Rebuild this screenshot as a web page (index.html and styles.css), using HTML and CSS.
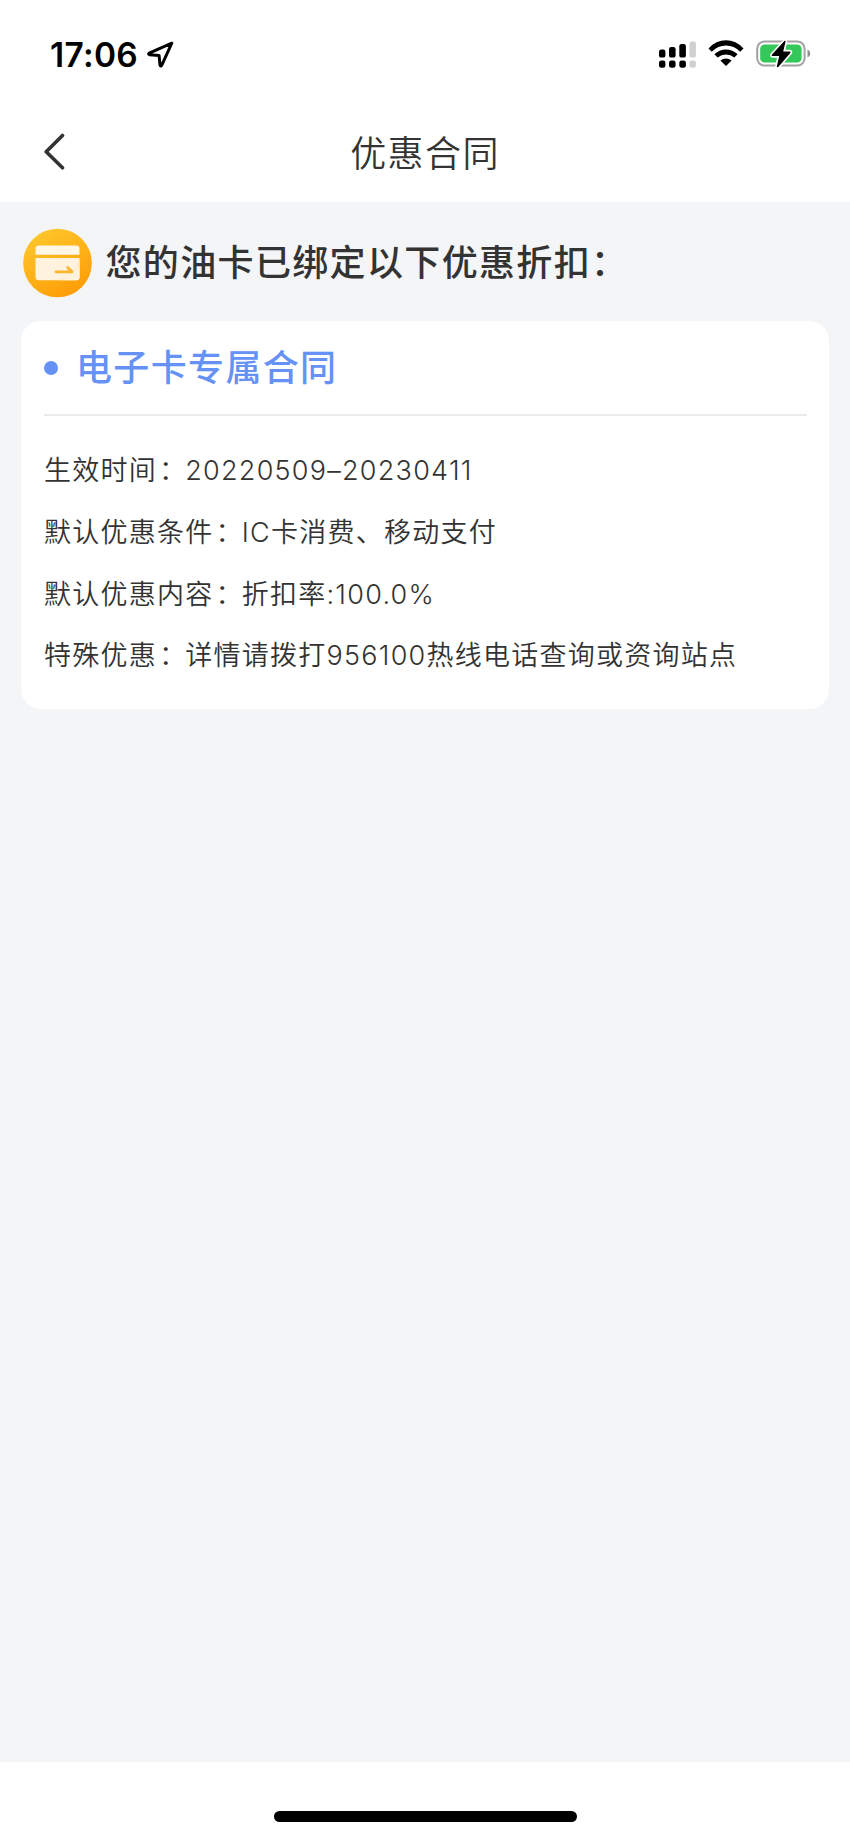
FILE: index.html
```html
<!DOCTYPE html>
<html lang="zh-CN">
<head>
<meta charset="utf-8">
<title>优惠合同</title>
<link rel="stylesheet" href="styles.css">
</head>
<body>
<div class="screen">
  <div class="status">
    <span class="time">17:06</span>
    <svg class="locate" width="30" height="30" viewBox="0 0 30 30"><path d="M25.8 3.2 3.2 13.2Q1.9 14.2 3.4 14.7L13.1 15.4 14 25.2Q14.7 27 15.7 25.3Z" fill="none" stroke="#000" stroke-width="3" stroke-linejoin="round"/></svg>
    <svg class="signal" width="38" height="28" viewBox="0 0 38 28">
      <rect x="0" y="8.6" width="6.4" height="8" rx="2.2"/><rect x="10" y="6" width="6.6" height="10.6" rx="2.2"/><rect x="20.3" y="3" width="6.6" height="13.6" rx="2.2"/>
      <rect x="0" y="19.4" width="6.4" height="7.4" rx="2.4"/><rect x="10" y="19.4" width="6.6" height="7.4" rx="2.4"/><rect x="20.3" y="19.4" width="6.6" height="7.4" rx="2.4"/>
      <g fill="#d0d0d0"><rect x="30.5" y="0.4" width="6.4" height="16.2" rx="2.2"/><rect x="30.5" y="19.4" width="6.4" height="7.4" rx="2.4"/></g>
    </svg>
    <svg class="wifi" width="36" height="26" viewBox="0 0 36 26"><path d="M0.5 8.4Q8 .3 18 .3T35.5 8.4L32.2 11.7Q26 5.6 18 5.6T3.8 11.7ZM6.4 14.3Q11.3 9.5 18 9.5T29.6 14.3L26.3 17.6Q22.7 14.6 18 14.6T9.7 17.6ZM12.4 20.4Q15 18.5 18 18.5T23.6 20.4L18 26Z"/></svg>
    <svg class="battery" width="56" height="30" viewBox="0 0 56 30">
      <rect x="1.2" y="2.4" width="47.4" height="24.2" rx="7.4" fill="#fff" stroke="#a2a2a2" stroke-width="2"/>
      <rect x="4.2" y="5.4" width="41.4" height="18.2" rx="4.4" fill="#34c759"/>
      <path d="M51.5 10.5Q54.2 11.5 54.2 14.5T51.5 18.5Z" fill="#8e8e8e"/>
      <path d="M28.6 1.8 15.8 15.8Q15.4 17 16.5 17H23.2L20.8 27.5Q21 28.8 22.3 28L34.5 13.8Q34.8 12.6 33.8 12.5H27.2L29.6 2.4Q29.5 1.3 28.6 1.8Z" stroke="#fff" stroke-width="3.4" paint-order="stroke"/>
    </svg>
  </div>
  <header class="nav">
    <svg class="back" width="22" height="38" viewBox="0 0 22 38"><path d="M18.5 2.5 2.2 18.7 18.5 34.8" fill="none" stroke="#333" stroke-width="3.6" stroke-linecap="round" stroke-linejoin="round"/></svg>
    <h1 class="title">优惠合同</h1>
  </header>
  <main class="content">
    <div class="intro">
      <svg class="badge" width="70" height="70" viewBox="0 0 70 70">
        <defs>
          <linearGradient id="gold" x1=".2" y1="0" x2=".75" y2="1"><stop offset="0" stop-color="#fdc82c"/><stop offset="1" stop-color="#ff9b05"/></linearGradient>
          <linearGradient id="fold" x1="1" y1="1" x2=".2" y2=".1"><stop offset="0" stop-color="#fff6e8"/><stop offset=".4" stop-color="#fff0d8"/><stop offset="1" stop-color="#ffd696"/></linearGradient>
        </defs>
        <circle cx="34.5" cy="35" r="34.3" fill="url(#gold)"/>
        <path d="M12.5 26.8V20.5Q12.5 17.5 15.5 17.5H53.5Q56.5 17.5 56.5 20.5V26.8Z" fill="#fff6e4"/>
        <path d="M12.5 30H56.5V49Q56.5 52.2 53 52.2H16Q12.5 52.2 12.5 49Z" fill="#fff3df"/>
        <path d="M56.5 31V49Q56.5 52.2 53 52.2H35Q51 46 56.5 31Z" fill="url(#fold)"/>
        <path d="M33 43.8H49L44.6 39.6" fill="none" stroke="#fdb52b" stroke-width="2.8" stroke-linecap="round" stroke-linejoin="round"/>
      </svg>
      <h2 class="heading">您的油卡已绑定以下优惠折扣<span class="colon">：</span></h2>
    </div>
    <section class="card">
      <div class="card-head"><span class="dot"></span><h3 class="card-title">电子卡专属合同</h3></div>
      <div class="rows">
        <p class="row">生效时间<span class="colon">：</span>20220509–20230411</p>
        <p class="row">默认优惠条件<span class="colon">：</span>IC卡消费、移动支付</p>
        <p class="row">默认优惠内容<span class="colon">：</span>折扣率:100.0%</p>
        <p class="row">特殊优惠<span class="colon">：</span>详情请拨打956100热线电话查询或资询站点</p>
      </div>
    </section>
  </main>
  <footer class="home"><div class="home-bar"></div></footer>
</div>
</body>
</html>
```
FILE: styles.css
```css
* { box-sizing: border-box; }
body { margin: 0; background: #fff; color: #333; font-family: Inter, "Noto Sans CJK SC", sans-serif; }
h1, h2, h3, p { margin: 0; }
svg { display: block; flex: none; }
.screen { width: 850px; height: 1839px; display: flex; flex-direction: column; overflow: hidden; }
.status { height: 102px; padding: 0 38px 0 50px; display: flex; align-items: flex-start; color: #000; }
.time { width: 96px; padding-top: 35px; font-size: 33.5px; font-weight: 600; line-height: 40px; letter-spacing: .3px; white-space: nowrap; }
.locate { margin-top: 40px; }
.signal { margin: 41px 0 0 483px; }
.wifi { margin: 40px 0 0 11px; }
.battery { margin: 39px 0 0 12px; }
.nav { height: 100px; padding: 0 43px; display: grid; grid-template-columns: 22px 1fr 22px; align-items: start; }
.back { margin: 31px 0 0 1px; }
.title { text-align: center; font-size: 36px; font-weight: 350; letter-spacing: 1.4px; line-height: 52px; padding-top: 26px; }
.content { flex: 1; background: #f3f5f7; padding: 26px 21px 0; }
.intro { display: flex; align-items: center; height: 70px; padding-left: 2px; }
.heading { margin: 0 0 0 12.5px; font-size: 36px; font-weight: 500; letter-spacing: 1.35px; line-height: 52px; white-space: nowrap; }
.colon { line-height: 0; vertical-align: 0; padding-left: 2px; margin-right: -2px; }
.heading .colon { padding-left: 0; margin-right: 0; }
.card { margin-top: 23px; height: 388px; background: #fff; border-radius: 20px; padding: 0 22px 0 23px; }
.card-head { height: 95px; border-bottom: 2px solid #ebebeb; display: flex; align-items: flex-start; }
.dot { width: 14px; height: 14px; margin-top: 40px; border-radius: 50%; background: #6691f5; }
.card-title { margin: 21px 0 0 18px; font-size: 36px; font-weight: 500; letter-spacing: 1.35px; line-height: 52px; color: #6691f5; }
.rows { padding-top: 24px; }
.row { height: 61.8px; line-height: 61.8px; font-size: 27px; font-weight: 350; letter-spacing: 1.25px; white-space: nowrap; }
.home { height: 77px; background: #fff; display: flex; justify-content: center; align-items: flex-start; }
.home-bar { margin-top: 49px; width: 303px; height: 11px; border-radius: 6px; background: #000; }
```
